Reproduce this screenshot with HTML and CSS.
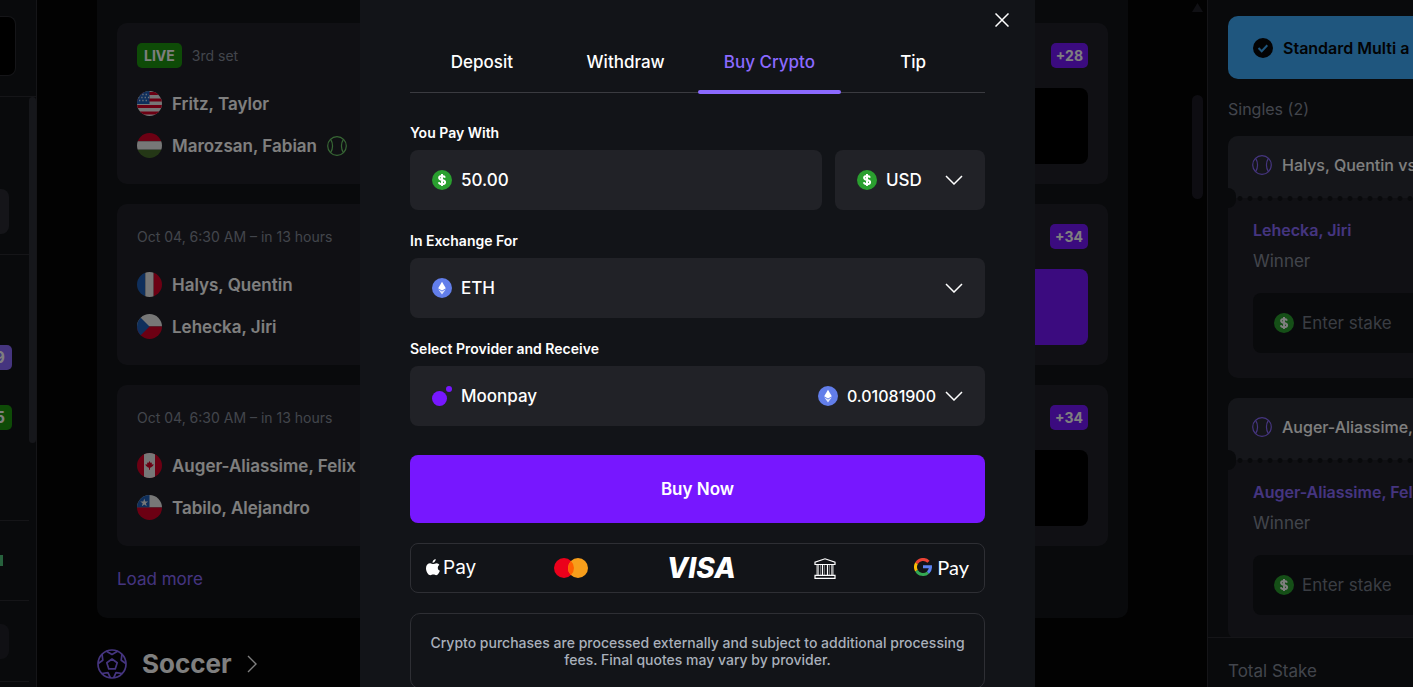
FILE: index.html
```html
<!DOCTYPE html>
<html lang="en">
<head>
  <meta charset="UTF-8">
  <meta name="viewport" content="width=device-width, initial-scale=1">
  <title>Buy Crypto</title>
  <link rel="stylesheet" href="styles.css">
</head>
<body>
  <!-- shared icons -->
  <svg width="0" height="0" class="sprite" aria-hidden="true">
    <symbol id="i-usd" viewBox="0 0 20 20">
      <circle cx="10" cy="10" r="10" fill="#2a9f2f"/>
      <path d="M13 7.6C12.6 6.4 11.4 5.9 10 5.9c-1.700 0-2.900.7-2.900 1.900 0 3 6 1.500 6 4.400 0 1.300-1.300 2-3.100 2-1.600 0-2.800-.6-3.200-1.900M10 4v12" fill="none" stroke="#fff" stroke-width="2"/>
    </symbol>
    <symbol id="i-eth" viewBox="0 0 20 20">
      <circle cx="10" cy="10" r="10" fill="#627eea"/>
      <path d="M10 3.800l3.800 6.400L10 12.500l-3.800-2.300z" fill="#fff"/>
      <path d="M6.200 11.200L10 13.500l3.800-2.300L10 16.400z" fill="#e3e8fb"/>
    </symbol>
    <symbol id="i-down" viewBox="0 0 18 10">
      <path d="M1 1l8 8 8-8" fill="none" stroke="currentColor" stroke-width="1.500"/>
    </symbol>
    <symbol id="i-tennis" viewBox="0 0 20 20">
      <g fill="none" stroke="currentColor" stroke-width="1.200">
        <circle cx="10" cy="10" r="9.300"/>
        <path d="M3.600 3.400c2.600 3.800 2.600 9.400 0 13.200M16.400 3.400c-2.600 3.800-2.600 9.400 0 13.200"/>
      </g>
    </symbol>
    <clipPath id="round"><circle cx="12.500" cy="12.500" r="12.500"/></clipPath>
  </svg>

  <div class="shell">
    <aside class="rail">
      <div class="rail-head"><div class="rail-search"></div></div>
      <div class="rail-body">
        <div class="rail-list">
          <div class="rail-group group-a"><div class="rail-tab"></div></div>
          <div class="rail-group group-b">
            <div class="rail-row"><span class="count violet">9</span></div>
            <div class="rail-row"><span class="count green">5</span></div>
          </div>
          <div class="rail-group group-c"><div class="rail-mark"></div></div>
          <div class="rail-group group-d"><div class="rail-tab dim"></div></div>
        </div>
        <div class="rail-scroll"></div>
      </div>
    </aside>

    <main class="feed">
      <section class="events">
        <article class="event">
          <div class="event-head">
            <span class="live">LIVE</span><span class="when">3rd set</span>
            <span class="more">+28</span>
          </div>
          <div class="event-body">
            <ul class="players">
              <li>
                <svg class="flag" viewBox="0 0 25 25"><g clip-path="url(#round)">
                  <path fill="#eee" d="M0 0h25v25H0z"/>
                  <path stroke="#d80027" stroke-width="3" d="M0 1.500h25M0 8h25M0 14.500h25M0 21h25" transform="translate(0 1)"/>
                  <path fill="#1f5fb8" d="M0 0h12.500v13H0z"/>
                  <path stroke="#dfe6f5" stroke-width="1.300" stroke-dasharray="1.300 2" d="M2 3.500h10M1 6.500h11M2 9.500h10"/>
                </g></svg>
                Fritz, Taylor
              </li>
              <li>
                <svg class="flag" viewBox="0 0 25 25"><g clip-path="url(#round)">
                  <path fill="#d80027" d="M0 0h25v8.300H0z"/><path fill="#eee" d="M0 8.300h25v8.400H0z"/><path fill="#496e2d" d="M0 16.700h25V25H0z"/>
                </g></svg>
                Marozsan, Fabian
                <svg class="ball serving"><use href="#i-tennis"/></svg>
              </li>
            </ul>
            <div class="market"></div>
          </div>
        </article>

        <article class="event">
          <div class="event-head">
            <span class="when">Oct 04, 6:30 AM – in 13 hours</span>
            <span class="more">+34</span>
          </div>
          <div class="event-body">
            <ul class="players">
              <li>
                <svg class="flag" viewBox="0 0 25 25"><g clip-path="url(#round)">
                  <path fill="#1f5fb8" d="M0 0h8.300v25H0z"/><path fill="#eee" d="M8.300 0h8.400v25H8.300z"/><path fill="#d80027" d="M16.700 0H25v25h-8.300z"/>
                </g></svg>
                Halys, Quentin
              </li>
              <li>
                <svg class="flag" viewBox="0 0 25 25"><g clip-path="url(#round)">
                  <path fill="#eee" d="M0 0h25v12.500H0z"/><path fill="#d80027" d="M0 12.500h25V25H0z"/><path fill="#1f5fb8" d="M0 0l12.500 12.500L0 25z"/>
                </g></svg>
                Lehecka, Jiri
              </li>
            </ul>
            <div class="market picked"></div>
          </div>
        </article>

        <article class="event">
          <div class="event-head">
            <span class="when">Oct 04, 6:30 AM – in 13 hours</span>
            <span class="more">+34</span>
          </div>
          <div class="event-body">
            <ul class="players">
              <li>
                <svg class="flag" viewBox="0 0 25 25"><g clip-path="url(#round)">
                  <path fill="#d80027" d="M0 0h25v25H0z"/><path fill="#eee" d="M7 0h11v25H7z"/>
                  <path fill="#d80027" d="M12.500 8l1.200 2 1.300-.6-.3 2.200 2-.4-.6 1.600-2.200 1.700-.9.200v2h-1v-2l-.9-.2-2.200-1.700-.6-1.600 2 .4-.3-2.200 1.300.6z"/>
                </g></svg>
                Auger-Aliassime, Felix
              </li>
              <li>
                <svg class="flag" viewBox="0 0 25 25"><g clip-path="url(#round)">
                  <path fill="#eee" d="M0 0h25v12.500H0z"/><path fill="#1f5fb8" d="M0 0h12.500v12.500H0z"/><path fill="#d80027" d="M0 12.500h25V25H0z"/>
                  <path fill="#eee" d="M7.300 3.500l1 3h3l-2.400 1.800.9 2.900-2.500-1.800-2.500 1.800.9-2.900-2.400-1.800h3z"/>
                </g></svg>
                Tabilo, Alejandro
              </li>
            </ul>
            <div class="market"></div>
          </div>
        </article>

        <a class="load-more" href="#">Load more</a>
      </section>

      <h2 class="sport">
        <svg class="soccer" viewBox="0 0 30 30" fill="none" stroke="currentColor" stroke-width="1.700" stroke-linejoin="round">
          <circle cx="15" cy="15" r="14"/>
          <path d="M15 10l5.200 3.800-2 6.100h-6.400l-2-6.100z"/>
          <path d="M9.500 2.200L15 5.500l5.500-3.300M1.200 14.500l4.600-3.300-.8-6.200M28.800 14.500l-4.600-3.300.8-6.200M5 24.500l6-.8 2.300 5M25 24.500l-6-.8-2.300 5"/>
        </svg>
        Soccer
        <svg class="next" viewBox="0 0 10 18" fill="none" stroke="currentColor" stroke-width="1.400"><path d="M1 1l8 8-8 8"/></svg>
      </h2>
    </main>

    <div class="feed-scroll">
      <span class="arrow"></span>
      <span class="thumb"></span>
    </div>

    <aside class="slip">
      <div class="slip-list">
        <div class="promo">
          <svg width="20" height="20" viewBox="0 0 20 20"><circle cx="10" cy="10" r="10" fill="#060608"/><path d="M5.500 10l3.200 3.200 5.600-6" fill="none" stroke="#3eacfc" stroke-width="2"/></svg>
          Standard Multi a
        </div>
        <p class="singles">Singles (2)</p>

        <div class="bet">
          <div class="bet-head"><svg class="ball"><use href="#i-tennis"/></svg>Halys, Quentin vs</div>
          <div class="bet-body">
            <a class="pick" href="#">Lehecka, Jiri</a>
            <p class="kind">Winner</p>
            <label class="stake"><svg class="coin"><use href="#i-usd"/></svg><input type="text" placeholder="Enter stake" aria-label="Stake on Lehecka, Jiri"></label>
          </div>
        </div>

        <div class="bet">
          <div class="bet-head"><svg class="ball"><use href="#i-tennis"/></svg>Auger-Aliassime,</div>
          <div class="bet-body">
            <a class="pick" href="#">Auger-Aliassime, Felix</a>
            <p class="kind">Winner</p>
            <label class="stake"><svg class="coin"><use href="#i-usd"/></svg><input type="text" placeholder="Enter stake" aria-label="Stake on Auger-Aliassime, Felix"></label>
          </div>
        </div>
      </div>
      <div class="slip-foot">Total Stake</div>
    </aside>
  </div>

  <div class="overlay">
    <div class="modal" role="dialog" aria-label="Wallet">
      <button class="close" type="button" aria-label="Close">
        <svg width="14" height="14" viewBox="0 0 14 14" fill="none" stroke="currentColor" stroke-width="1.500"><path d="M.5.5l13 13M13.500.5l-13 13"/></svg>
      </button>

      <nav class="tabs">
        <button type="button">Deposit</button>
        <button type="button">Withdraw</button>
        <button type="button" class="active">Buy Crypto</button>
        <button type="button">Tip</button>
      </nav>

      <form class="buy">
        <div class="group">
          <label class="title" for="amount">You Pay With</label>
          <div class="pair">
            <div class="field">
              <svg class="coin"><use href="#i-usd"/></svg>
              <input id="amount" type="text" value="50.00">
            </div>
            <div class="field currency">
              <svg class="coin"><use href="#i-usd"/></svg>
              <select aria-label="Currency"><option>USD</option></select>
              <svg class="down"><use href="#i-down"/></svg>
            </div>
          </div>
        </div>

        <div class="group">
          <label class="title" for="coin">In Exchange For</label>
          <div class="field">
            <svg class="coin"><use href="#i-eth"/></svg>
            <select id="coin"><option>ETH</option></select>
            <svg class="down"><use href="#i-down"/></svg>
          </div>
        </div>

        <div class="group">
          <label class="title" for="provider">Select Provider and Receive</label>
          <div class="field">
            <svg class="coin" viewBox="0 0 20 20" fill="#7717ff"><circle cx="7.500" cy="12.500" r="7.500"/><circle cx="17" cy="3" r="3"/></svg>
            <select id="provider"><option>Moonpay</option></select>
            <svg class="coin"><use href="#i-eth"/></svg>
            <span class="quote">0.01081900</span>
            <svg class="down"><use href="#i-down"/></svg>
          </div>
        </div>

        <button class="submit" type="button">Buy Now</button>
      </form>

      <div class="methods">
        <span class="brand apple">
          <svg width="14" height="17" viewBox="0 0 14 17" fill="#fff"><path d="M9.700 0c.1 1.900-1.400 3.700-3.200 3.700C6.300 2 8 .2 9.700 0z"/><path d="M13.400 6c-2.300 1.400-2 4.800.5 5.800-.5 1.500-2 4.500-3.700 4.500-1.100 0-1.500-.7-2.900-.7s-1.900.7-2.900.7C2.300 16.300 0 12.700 0 9.300 0 6 2.100 4.300 4.100 4.300c1.300 0 2.200.8 3.100.8.900 0 2-.9 3.500-.9 1.100 0 2.100.7 2.700 1.800z"/></svg>Pay
        </span>
        <svg width="34" height="20" viewBox="0 0 34 20"><circle cx="10" cy="10" r="10" fill="#eb001b"/><circle cx="24" cy="10" r="10" fill="#f79e1b"/><path d="M17 2.900a10 10 0 0 1 0 14.200 10 10 0 0 1 0-14.200z" fill="#ff5f00"/></svg>
        <span class="visa">VISA</span>
        <svg width="22" height="21" viewBox="0 0 22 21" fill="none" stroke="#fff" stroke-width="1.200"><path d="M1 6.500V4.200L11 .8l10 3.400v2.300zM1 20.300v-3h20v3zM4 6.500v10.800M8.500 6.500v10.800M13.500 6.500v10.800M18 6.500v10.800"/><path d="M2.500 6.500v10.800M6.500 6.500v10.800M10.500 6.500v10.800M15.500 6.500v10.800M19.500 6.500v10.800" stroke-width=".4"/></svg>
        <span class="brand google">
          <svg width="18" height="18" viewBox="0 0 18 18" fill="none" stroke-width="3"><path stroke="#ea4335" d="M2.500 5.300A7.500 7.500 0 0 1 14.500 3.800"/><path stroke="#fbbc05" d="M2.500 12.700a7.500 7.500 0 0 1 0-7.400"/><path stroke="#34a853" d="M14 14.600A7.500 7.500 0 0 1 2.500 12.700"/><path stroke="#5b82f0" d="M9 8.700h7.500a7.500 7.500 0 0 1-2.500 5.900"/></svg>Pay
        </span>
      </div>

      <p class="note">Crypto purchases are processed externally and subject to additional processing fees. Final quotes may vary by provider.</p>
    </div>
  </div>
</body>
</html>
```

FILE: styles.css
```css
* {
  box-sizing: border-box;
}
body {
  margin: 0;
  height: 100vh;
  overflow: hidden;
  background: #040404;
  color: #fff;
  font-family: Inter, "Liberation Sans", sans-serif;
  font-size: 17px;
}
p, h2, ul {
  margin: 0;
  padding: 0;
}
a {
  text-decoration: none;
}
button, input, select {
  font: inherit;
  color: inherit;
  background: none;
  border: 0;
  padding: 0;
}
svg {
  flex: none;
}
.sprite {
  position: absolute;
}
.shell {
  display: flex;
  height: 100vh;
}

/* left rail */
.rail {
  display: flex;
  flex-direction: column;
  flex: none;
  width: 37px;
  overflow: hidden;
  background: #121418;
  border-right: 1px solid #2a2b31;
}
.rail-head {
  padding: 16px 20px 20px 0;
  border-bottom: 1px solid #2a2b31;
}
.rail-search {
  height: 60px;
  background: #000;
  border: 1px solid #2a2b31;
  border-left: 0;
  border-radius: 0 8px 8px 0;
}
.rail-body {
  display: flex;
}
.rail-list {
  flex: 1;
}
.rail-scroll {
  width: 7px;
  height: 346px;
  background: #2d2e36;
  border-radius: 4px;
}
.rail-group {
  border-bottom: 1px solid #2a2b31;
}
.group-a {
  padding: 92px 20px 20px 0;
}
.group-b {
  display: flex;
  flex-direction: column;
  gap: 35px;
  padding: 90px 0;
}
.group-c {
  padding: 34px 0;
}
.group-d {
  padding: 23px 20px 22px 0;
}
.rail-tab {
  height: 45px;
  background: #2a2b33;
  border-radius: 0 8px 8px 0;
}
.rail-tab.dim {
  height: 35px;
  background: #212128;
}
.rail-row {
  display: flex;
  justify-content: flex-end;
  width: 12px;
  overflow: hidden;
}
.count {
  padding: 0 7px;
  border-radius: 5px;
  font-size: 16px;
  font-weight: 700;
  line-height: 25px;
}
.violet {
  background: #8b6aff;
}
.green {
  background: #1c960e;
}
.rail-mark {
  width: 3px;
  height: 11px;
  background: #4fc27a;
}

/* events feed */
.feed {
  flex: 1;
  min-width: 0;
  padding: 0 60px;
}
.events {
  display: flex;
  flex-direction: column;
  gap: 20px;
  padding: 23px 20px 26px;
  background: #121418;
  border-radius: 0 0 10px 10px;
}
.event {
  padding: 20px;
  background: #212128;
  border-radius: 10px;
}
.event-head {
  display: flex;
  align-items: center;
  gap: 10px;
  height: 25px;
}
.live, .more {
  padding: 0 7px;
  border-radius: 5px;
  font-size: 14px;
  font-weight: 700;
  line-height: 25px;
}
.live {
  background: #1c960e;
}
.more {
  margin-left: auto;
  padding: 0 5px;
  background: #7717ff;
}
.when {
  color: #858b98;
  font-size: 14px;
}
.event-body {
  display: flex;
  justify-content: space-between;
  margin-top: 20px;
}
.players {
  display: flex;
  flex-direction: column;
  gap: 17px;
  padding-top: 3px;
  list-style: none;
  font-weight: 600;
}
.players li {
  display: flex;
  align-items: center;
  gap: 10px;
  height: 25px;
  white-space: nowrap;
}
.flag {
  width: 25px;
  height: 25px;
}
.ball {
  width: 20px;
  height: 20px;
  color: #8b6aff;
}
.serving {
  color: #6fcf6a;
}
.market {
  width: 30%;
  height: 76px;
  background: #000;
  border-radius: 8px;
}
.market.picked {
  background: #7717ff;
}
.load-more {
  color: #8b6aff;
  line-height: 26px;
}
.sport {
  display: flex;
  align-items: center;
  gap: 15px;
  margin-top: 28px;
  font-size: 26px;
  font-weight: 700;
  line-height: 36px;
}
.soccer {
  width: 30px;
  height: 30px;
  color: #8b6aff;
}
.next {
  width: 10px;
  height: 18px;
}
.feed-scroll {
  flex: none;
  width: 19px;
  padding: 3px 4px;
}
.arrow {
  display: block;
  height: 9px;
  background: #212128;
  clip-path: polygon(50% 0, 100% 100%, 0 100%);
}
.thumb {
  display: block;
  height: 104px;
  margin-top: 83px;
  background: #1c1a24;
  border-radius: 6px;
}

/* bet slip */
.slip {
  display: flex;
  flex-direction: column;
  flex: none;
  width: 206px;
  overflow: hidden;
  background: #121418;
  border-left: 1px solid #2a2b31;
  white-space: nowrap;
}
.slip-list {
  flex: 1;
  min-height: 0;
  overflow: hidden;
  padding: 16px 0 0 20px;
}
.promo {
  display: flex;
  align-items: center;
  gap: 10px;
  height: 63px;
  padding-left: 25px;
  background: #3eacfc;
  border-radius: 10px 0 0 10px;
  color: #060608;
  font-size: 16px;
  font-weight: 600;
}
.singles {
  padding: 15px 0 12px;
  color: #858b98;
  font-size: 16px;
  line-height: 30px;
}
.bet {
  margin-bottom: 20px;
  background: #212128;
  border-radius: 10px 0 0 10px;
}
.bet-head {
  position: relative;
  display: flex;
  align-items: center;
  gap: 10px;
  height: 62px;
  padding: 0 0 4px 24px;
  background: #2a2c34;
  border-radius: 10px 0 0 0;
  font-size: 16px;
  font-weight: 500;
}
/* perforated edge between the two halves of the ticket */
.bet-head::before {
  content: "";
  position: absolute;
  left: 7px;
  right: 0;
  bottom: -3px;
  height: 5px;
  background: radial-gradient(circle, #121418 2px, transparent 3px) 0 0 / 10px 5px;
}
.bet-head::after {
  content: "";
  position: absolute;
  left: 0;
  bottom: -10px;
  width: 8px;
  height: 20px;
  background: #121418;
  border-radius: 0 10px 10px 0;
}
.bet-body {
  padding: 17px 0 25px 25px;
  line-height: 31px;
}
.pick {
  display: block;
  color: #8b6aff;
  font-size: 16px;
  font-weight: 600;
}
.kind {
  color: #858b98;
}
.stake {
  display: flex;
  align-items: center;
  gap: 8px;
  height: 60px;
  margin-top: 16px;
  padding-left: 21px;
  background: #121418;
  border-radius: 8px 0 0 8px;
}
.stake input {
  width: 100px;
}
.stake input::placeholder {
  color: #757b86;
}
.slip-foot {
  height: 50px;
  padding: 18px 20px 0;
  border-top: 1px solid #2a2b31;
  color: #858b98;
  line-height: 30px;
}

/* modal */
.overlay {
  position: fixed;
  inset: 0;
  display: flex;
  justify-content: center;
  padding-right: 18px;
  overflow: hidden;
  background: rgba(0, 0, 0, 0.5);
}
.modal {
  position: relative;
  width: 675px;
  height: max-content;
  min-height: 100%;
  padding: 32px 50px 20px;
  background: #121418;
}
.close {
  position: absolute;
  top: 13px;
  right: 26px;
  line-height: 0;
}
.tabs {
  display: grid;
  grid-template-columns: repeat(4, 1fr);
  border-bottom: 1px solid #3a3b40;
}
.tabs button {
  position: relative;
  height: 60px;
  font-weight: 500;
}
.tabs .active {
  color: #8b6aff;
}
.tabs .active::after {
  content: "";
  position: absolute;
  left: 0;
  right: 0;
  bottom: -2px;
  height: 4px;
  background: #8b6aff;
  border-radius: 2px;
}
.buy {
  display: flex;
  flex-direction: column;
  gap: 22px;
  padding-top: 31px;
}
.title {
  display: block;
  margin-bottom: 8px;
  font-size: 14px;
  font-weight: 600;
  line-height: 18px;
}
.pair {
  display: flex;
  gap: 13px;
}
.field {
  display: flex;
  flex: 1;
  align-items: center;
  gap: 9px;
  height: 60px;
  padding: 0 22px;
  background: #212227;
  border-radius: 8px;
  font-weight: 500;
}
.field input, .field select {
  flex: 1;
  min-width: 0;
  appearance: none;
  outline: 0;
}
.currency {
  flex: 0 0 150px;
}
.quote {
  font-size: 16px;
}
.coin {
  width: 20px;
  height: 20px;
}
.down {
  width: 18px;
  height: 10px;
}
.submit {
  height: 68px;
  margin-top: 7px;
  background: #7717ff;
  border-radius: 8px;
  font-weight: 600;
}
.methods {
  display: flex;
  align-items: center;
  justify-content: space-between;
  height: 50px;
  margin-top: 20px;
  padding: 0 15px;
  border: 1px solid #2e2f34;
  border-radius: 8px;
}
.brand {
  display: flex;
  align-items: center;
  gap: 3px;
  padding-bottom: 2px;
  font-size: 19px;
}
.google {
  gap: 5px;
  font-family: Lato, sans-serif;
  font-size: 20px;
}
.visa {
  font-size: 28px;
  font-style: italic;
  font-weight: 800;
  line-height: 28px;
}
.note {
  margin-top: 20px;
  padding: 20px 15px;
  border: 1px solid #2e2f34;
  border-radius: 10px;
  color: #a9b0bb;
  font-size: 14px;
  font-weight: 500;
  line-height: 17px;
  text-align: center;
}
```
